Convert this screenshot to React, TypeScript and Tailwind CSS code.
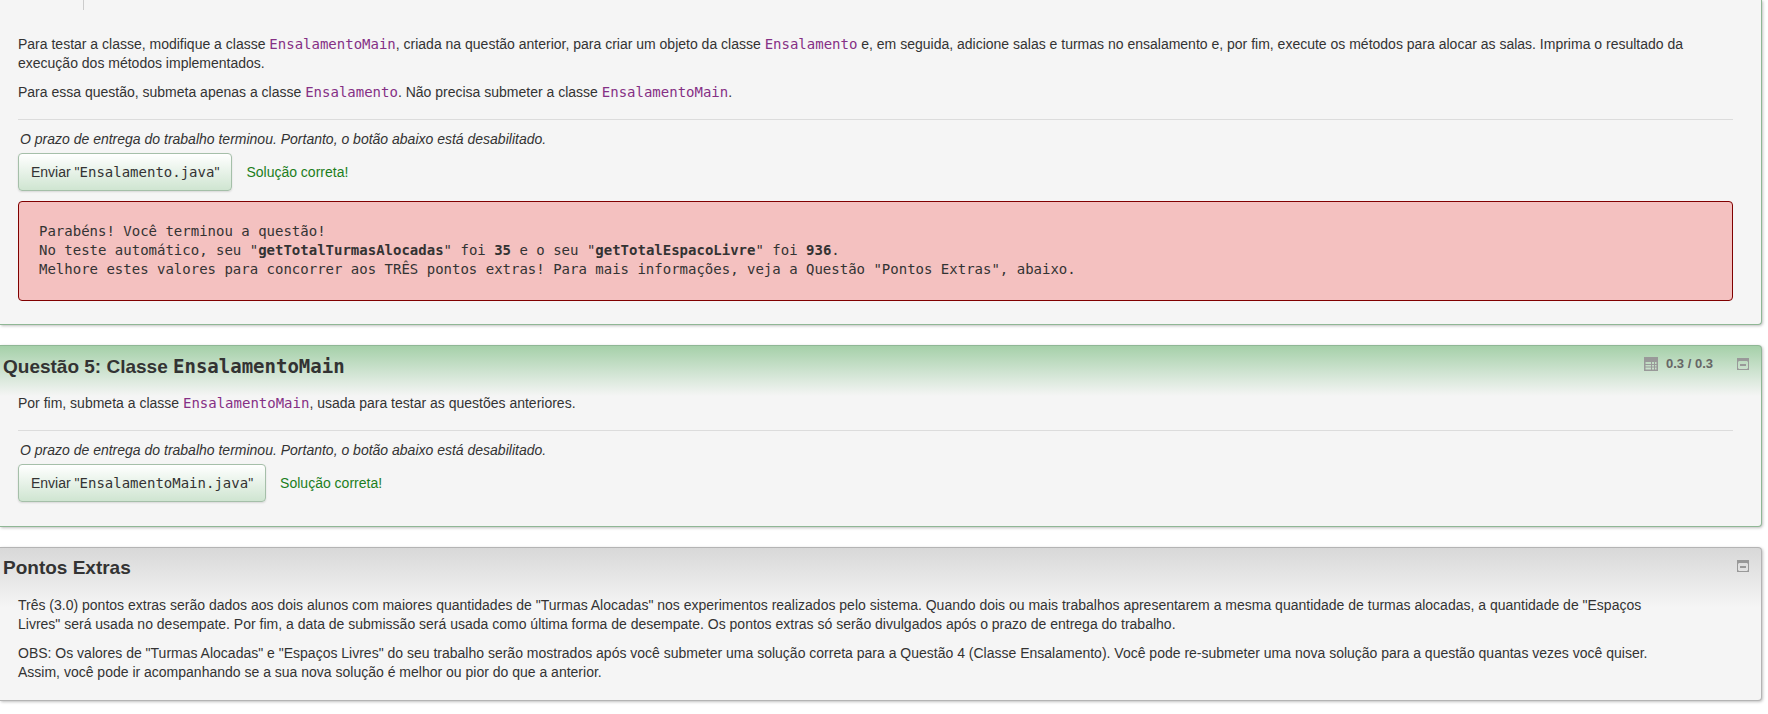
import type { ReactNode } from "react";

const MONO = "font-['DejaVu_Sans_Mono',monospace]";

function Code({ children }: { children: ReactNode }) {
  return <code className="font-['DejaVu_Sans_Mono',monospace] text-[14px] leading-none text-[#853085]">{children}</code>;
}

function TableIcon() {
  return (
    <svg width="14" height="14" viewBox="0 0 14 14" fill="#999" aria-hidden="true">
      <path fillRule="evenodd" d="M0 0h14v14H0zM1.5 5v2H7V5zM8 5v2h2V5zM11 5v2h1.5V5zM1.5 8v1.5H7V8zM8 8v1.5h2V8zM11 8v1.5h1.5V8zM1.5 10.5v2H7v-2zM8 10.5v2h2v-2zM11 10.5v2h1.5v-2z" />
    </svg>
  );
}

function CollapseButton() {
  return (
    <button type="button" aria-label="Recolher" className="block">
      <svg width="12" height="12" viewBox="0 0 12 12" fill="#999" aria-hidden="true">
        <path fillRule="evenodd" d="M0 0h12v12H0zM1 4v6l1 1h8l1-1V4l-1-1H2z" />
        <path d="M3 6h6v2H3z" />
      </svg>
    </button>
  );
}

function Submission({ file }: { file: string }) {
  return (
    <>
      <hr className="mt-[17px] border-[#dcdcdc]" />
      <p className="mt-[10px] pl-[2px] italic">
        O prazo de entrega do trabalho terminou. Portanto, o botão abaixo está desabilitado.
      </p>
      <div className="mt-[4px] flex items-center gap-[14px]">
        <button
          type="button"
          disabled
          className="h-[38px] rounded-[4px] border border-[#a5bfa9] bg-linear-to-b from-white to-[#cfe5d1] px-[12px] shadow-[0_1px_2px_rgba(0,0,0,0.12)]"
        >
          Enviar "<span className={MONO}>{file}</span>"
        </button>
        <span className="text-[#1c7e1c]">Solução correta!</span>
      </div>
    </>
  );
}

export default function App() {
  return (
    <main className="flex flex-col gap-[20px] overflow-hidden bg-white pr-[6px] font-['Liberation_Sans',Arial,sans-serif] text-[14px] leading-[19px] text-[#333]">
      <section className="rounded-br-[4px] border-r border-b border-[#8fb795] bg-[#f5f5f5] pr-[28px] pb-[23px] pl-[18px] shadow-[1px_1px_3px_rgba(0,0,0,0.25)]">
        <div className="ml-[65px] h-[10px] border-l border-[#ccc]" />
        <p className="mt-[25px]">
          Para testar a classe, modifique a classe <Code>EnsalamentoMain</Code>, criada na questão anterior, para criar
          um objeto da classe <Code>Ensalamento</Code> e, em seguida, adicione salas e turmas no ensalamento e, por
          fim, execute os métodos para alocar as salas. Imprima o resultado da
          <br />
          execução dos métodos implementados.
        </p>
        <p className="mt-[10px]">
          Para essa questão, submeta apenas a classe <Code>Ensalamento</Code>. Não precisa submeter a classe{" "}
          <Code>EnsalamentoMain</Code>.
        </p>
        <Submission file="Ensalamento.java" />
        <div className="mt-[10px] rounded-[4px] border border-[#800000] bg-[#f4c1c0] px-[20px] pt-[20px] pb-[21px] font-['DejaVu_Sans_Mono',monospace]">
          <p>Parabéns! Você terminou a questão!</p>
          <p>
            No teste automático, seu "<b>getTotalTurmasAlocadas</b>" foi <b>35</b> e o seu "<b>getTotalEspacoLivre</b>"
            foi <b>936</b>.
          </p>
          <p>
            Melhore estes valores para concorrer aos TRÊS pontos extras! Para mais informações, veja a Questão "Pontos
            Extras", abaixo.
          </p>
        </div>
      </section>

      <section className="rounded-r-[4px] border-y border-r border-[#8fb795] bg-[#f5f5f5] bg-[linear-gradient(to_bottom,#a5d0a9,#f5f5f5_50px)] pb-[24px] shadow-[1px_1px_3px_rgba(0,0,0,0.25)]">
        <header className="flex h-[48px] items-start justify-between pr-[12px] pl-[3px]">
          <h2 className="pt-[8px] text-[19px] leading-[24px] font-bold">
            Questão 5: Classe <span className={MONO}>EnsalamentoMain</span>
          </h2>
          <div className="flex items-center gap-[24px] pt-[8px]">
            <span className="flex items-center gap-[8px] text-[13px] font-bold text-[#666]">
              <TableIcon />
              0.3 / 0.3
            </span>
            <CollapseButton />
          </div>
        </header>
        <div className="pr-[28px] pl-[18px]">
          <p>
            Por fim, submeta a classe <Code>EnsalamentoMain</Code>, usada para testar as questões anteriores.
          </p>
          <Submission file="EnsalamentoMain.java" />
        </div>
      </section>

      <section className="mb-[13px] rounded-r-[4px] border-y border-r border-[#b4b4b4] bg-[#f5f5f5] bg-[linear-gradient(to_bottom,#d8d8d8,#f5f5f5_60px)] pb-[18px] shadow-[1px_1px_3px_rgba(0,0,0,0.25)]">
        <header className="flex h-[48px] items-start justify-between pr-[12px] pl-[3px]">
          <h2 className="pt-[8px] text-[19px] leading-[24px] font-bold">Pontos Extras</h2>
          <div className="pt-[12px]">
            <CollapseButton />
          </div>
        </header>
        <div className="flex flex-col gap-[10px] pr-[28px] pl-[18px]">
          <p>
            Três (3.0) pontos extras serão dados aos dois alunos com maiores quantidades de "Turmas Alocadas" nos
            experimentos realizados pelo sistema. Quando dois ou mais trabalhos apresentarem a mesma quantidade de
            turmas alocadas, a quantidade de "Espaços
            <br />
            Livres" será usada no desempate. Por fim, a data de submissão será usada como última forma de desempate. Os
            pontos extras só serão divulgados após o prazo de entrega do trabalho.
          </p>
          <p>
            OBS: Os valores de "Turmas Alocadas" e "Espaços Livres" do seu trabalho serão mostrados após você submeter
            uma solução correta para a Questão 4 (Classe Ensalamento). Você pode re-submeter uma nova solução para a
            questão quantas vezes você quiser.
            <br />
            Assim, você pode ir acompanhando se a sua nova solução é melhor ou pior do que a anterior.
          </p>
        </div>
      </section>
    </main>
  );
}
